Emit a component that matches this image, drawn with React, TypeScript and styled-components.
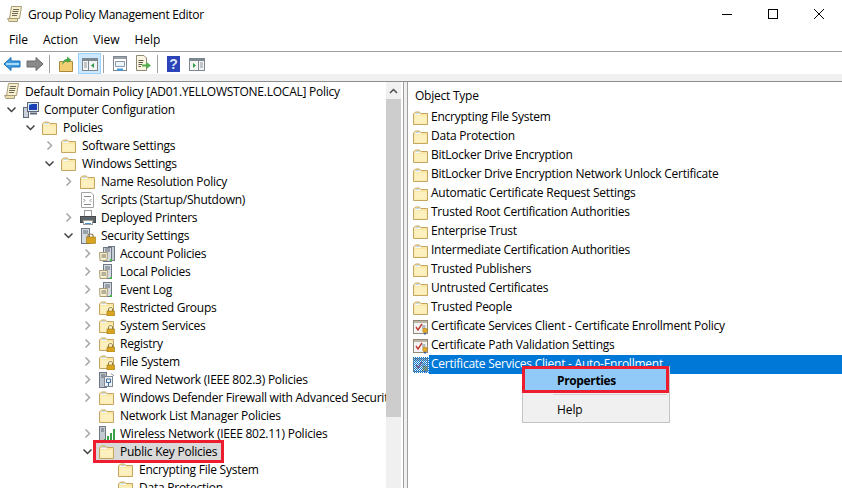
import React from "react";
import styled, { createGlobalStyle } from "styled-components";

const GlobalStyle = createGlobalStyle`
  html, body {
    margin: 0;
    padding: 0;
    background: #fff;
  }
  * {
    box-sizing: border-box;
  }
  svg {
    flex: none;
  }
`;

type IconName =
  | "folder"
  | "lockFolder"
  | "scroll"
  | "computer"
  | "script"
  | "printer"
  | "secure"
  | "server"
  | "serverPair"
  | "wired"
  | "wireless"
  | "cert";

const Folder = () => (
  <>
    <path d="M0.5 4V14.5H14.5V3.5H7.5L6.5 2H2.5Z" fill="#fbe7a4" stroke="#c4a662" />
    <path d="M1.5 6H13.5V13.5H1.5Z" fill="#fdf0bf" />
    <path d="M1.5 4.5H7L8 3.8" fill="none" stroke="#f4f8fb" />
    <path d="M3 3.5H6" stroke="#b9d6ee" />
  </>
);

const Lock = () => (
  <>
    <path d="M9.5 11V9C9.5 7 13.5 7 13.5 9V11" fill="none" stroke="#8a7a50" />
    <rect x="8" y="11" width="7.5" height="5" fill="#d9a520" stroke="#9a7414" strokeWidth="0.6" />
  </>
);

const Icon = ({ name, dithered }: { name: IconName; dithered?: boolean }) => {
  return (
    <svg width="16" height="16" viewBox="0 0 16 16">
      {name === "folder" && <Folder />}
      {name === "lockFolder" && (
        <>
          <Folder />
          <Lock />
        </>
      )}
      {name === "scroll" && (
        <>
          <path d="M4.5 0.5H14.5L12.5 12.5H2.5Z" fill="#f8efcf" stroke="#a89c78" />
          <path d="M0.5 12.5H10.5V15.5H2Z" fill="#ecdfb2" stroke="#a89c78" />
          <path d="M6 3.5H12M5.5 5.5H11.5M5 7.5H11M5 9.5H10" stroke="#6f6a55" />
        </>
      )}
      {name === "computer" && (
        <>
          <rect x="0.5" y="5.5" width="5" height="10" fill="#c9d0da" stroke="#5c6878" />
          <rect x="4.5" y="0.5" width="11" height="9" fill="#dfe6ee" stroke="#5c6878" />
          <rect x="6" y="2" width="8" height="6" fill="#1b3fb5" />
          <path d="M6 3.5L9 2H6Z" fill="#5ec8f0" />
          <path d="M7 11.5H14" stroke="#5c6878" strokeWidth="2" />
        </>
      )}
      {name === "script" && (
        <>
          <path d="M1.5 0.5H11L13.5 3V15.5H1.5Z" fill="#fff" stroke="#a4a4a4" />
          <path d="M4 4.5H11M3.5 7L5 8.5L3.5 10M11.5 7L10 8.5L11.5 10M4 12.5H11" stroke="#8a8a8a" fill="none" />
        </>
      )}
      {name === "printer" && (
        <>
          <rect x="4.5" y="0.5" width="7" height="6" fill="#fff" stroke="#9a9a9a" />
          <rect x="0.5" y="6.5" width="15" height="6" fill="#5f6468" stroke="#44484c" />
          <rect x="3.5" y="10.5" width="9" height="4" fill="#fff" stroke="#9a9a9a" />
          <path d="M5 13.5H11" stroke="#4b90d0" />
        </>
      )}
      {name === "secure" && (
        <>
          <rect x="1.5" y="0.5" width="8" height="15" fill="#d6dbe1" stroke="#6e7884" />
          <path d="M3 3H8M3 5H8" stroke="#5c6674" />
          <path d="M8 9V7.5C8 5.5 13 5.5 13 7.5V9" fill="none" stroke="#8a7a50" strokeWidth="1.2" />
          <rect x="6.5" y="9" width="9" height="6.5" fill="#d9a520" stroke="#9a7414" strokeWidth="0.6" />
        </>
      )}
      {(name === "server" || name === "serverPair") && (
        <>
          {name === "serverPair" && <rect x="9.5" y="0.5" width="6" height="14" fill="#c8ced6" stroke="#6e7884" />}
          <rect x="4.5" y={name === "server" ? 0.5 : 1.5} width="8" height="14" fill="#d6dbe1" stroke="#6e7884" />
          <path d="M6 3H11M6 5H11" stroke="#5c6674" />
          <path d="M0.5 6.5H8.5L8 14.5H1Z" fill="#f6efd2" stroke="#a89c78" />
          <path d="M2.5 9H7M2.5 11H7" stroke="#77715a" />
          <rect x="11" y="13" width="2" height="2" fill="#3fbf3f" />
        </>
      )}
      {name === "wired" && (
        <>
          <rect x="0.5" y="0.5" width="7" height="15" fill="#b9c1ca" stroke="#6e7884" />
          <path d="M2 3H6M2 5H6" stroke="#5c6674" />
          <rect x="5.5" y="4.5" width="8" height="10" fill="#eef2f6" stroke="#7f8994" />
          <path d="M7.5 7H11.5V10.5H7.5ZM9.5 10.5V14" fill="none" stroke="#3f6f9f" />
          <path d="M12 1.5L15 4" stroke="#8a8f96" />
        </>
      )}
      {name === "wireless" && (
        <>
          <rect x="0.5" y="0.5" width="6" height="15" fill="#c3cad2" stroke="#6e7884" />
          <path d="M2 3H5M2 5H5" stroke="#5c6674" />
          <path d="M5 15H7V13H5ZM8 15H10V10H8ZM11 15H13V7H11ZM14 15H16V3H14Z" fill="#3aa04a" />
          <path d="M1 15.5H5L3 12Z" fill="#f6efd2" stroke="#a89c78" strokeWidth="0.5" />
        </>
      )}
      {name === "cert" && (
        <>
          <rect x="0.5" y="1.5" width="14" height="13" fill="#f3f4f6" stroke="#93897a" />
          <path d="M1 3H14" stroke="#bfb6a4" strokeWidth="2" />
          <path d="M3 8L5 11L9 5" fill="none" stroke="#c43a2e" strokeWidth="1.4" />
          <path d="M9 7H12.5M9 9H12" stroke="#7b8594" />
          <path d="M11 13V16L12 15L13 16V13Z" fill="#3a62b0" />
          <circle cx="12" cy="11.5" r="2.4" fill="#e3a928" stroke="#a97a12" strokeWidth="0.5" />
        </>
      )}
      {dithered && (
        <>
          <defs>
            <pattern id="dither" width="2" height="2" patternUnits="userSpaceOnUse">
              <rect width="1" height="1" fill="#0078d7" />
              <rect x="1" y="1" width="1" height="1" fill="#0078d7" />
            </pattern>
          </defs>
          <rect width="16" height="16" fill="url(#dither)" />
        </>
      )}
    </svg>
  );
};

const Window = styled.div`
  position: relative;
  width: 842px;
  height: 488px;
  overflow: hidden;
  background: #fff;
  font-family: "Open Sans", "Noto Sans", "Liberation Sans", sans-serif;
  font-size: 12px;
  color: #000;
  display: flex;
  flex-direction: column;
`;

const TitleBar = styled.div`
  height: 28px;
  flex: none;
  display: flex;
  align-items: center;
  padding-left: 7px;
`;

const TitleText = styled.span`
  margin-left: 5px;
  flex: 1;
  letter-spacing: -0.3px;
`;

const WindowButton = styled.div`
  width: 46px;
  height: 28px;
  display: flex;
  align-items: center;
  justify-content: center;
`;

const MenuBar = styled.div`
  height: 24px;
  flex: none;
  display: flex;
  align-items: center;
  padding-left: 9px;
  gap: 15px;
  border-bottom: 1px solid #a0a0a0;
`;

const ToolBar = styled.div`
  height: 22px;
  flex: none;
  display: flex;
  align-items: center;
  padding: 1px 0 0 3px;
`;

const ToolSlot = styled.div<{ $left: number }>`
  margin-left: ${(p) => p.$left}px;
  display: flex;
`;

const ToolSep = styled.div<{ $left: number }>`
  width: 1px;
  height: 18px;
  background: #a0a0a0;
  margin-left: ${(p) => p.$left}px;
`;

const ToolButton = styled.div`
  width: 23px;
  height: 21px;
  margin-left: 3px;
  display: flex;
  align-items: center;
  justify-content: center;
  background: #cce8ff;
  border: 1px solid #99d1ff;
`;

const Strip = styled.div`
  height: 8px;
  flex: none;
  background: #f0f0f0;
  border-bottom: 1px solid #8e8e8e;
`;

const Panes = styled.div`
  flex: 1;
  display: flex;
  min-height: 0;
`;

const TreePane = styled.div`
  width: 386px;
  flex: none;
  overflow: hidden;
`;

const ScrollBar = styled.div`
  width: 15px;
  flex: none;
  background: #f0f0f0;
  display: flex;
  flex-direction: column;
`;

const ScrollArrow = styled.div`
  height: 17px;
  display: flex;
  align-items: center;
  justify-content: center;
`;

const ScrollThumb = styled.div`
  height: 318px;
  background: #cdcdcd;
`;

const Divider = styled.div`
  width: 5px;
  flex: none;
  margin-left: 2px;
  background: #f0f0f0;
  border-left: 1px solid #a0a0a0;
  border-right: 1px solid #a0a0a0;
`;

const ListPane = styled.div`
  flex: 1;
  min-width: 0;
`;

const RootRow = styled.div`
  height: 18px;
  display: flex;
  align-items: center;
  white-space: nowrap;
  padding-left: 4px;
`;

const TreeRow = styled.div<{ $level: number }>`
  height: 18px;
  display: flex;
  align-items: center;
  white-space: nowrap;
  padding-left: ${(p) => p.$level * 19 - 15}px;
`;

const Twist = styled.div`
  width: 14px;
  height: 16px;
  margin-right: 3px;
  flex: none;
  display: flex;
  align-items: center;
  justify-content: center;
`;

const TreeEntry = styled.div<{ $selected?: boolean }>`
  display: flex;
  align-items: center;
  height: 17px;
  align-self: flex-end;
  margin-left: ${(p) => (p.$selected ? "-1px" : "0")};
  padding: ${(p) => (p.$selected ? "0 4px 0 3px" : "0 2px")};
  background: ${(p) => (p.$selected ? "#d9d9d9" : "transparent")};
  outline: ${(p) => (p.$selected ? "3px solid #ed1c2e" : "none")};
`;

const TreeLabel = styled.span`
  margin-left: 5px;
  letter-spacing: -0.24px;
`;

const ListHeader = styled.div`
  height: 26px;
  display: flex;
  align-items: center;
  padding-left: 7px;
  letter-spacing: -0.24px;
`;

const ListRow = styled.div`
  height: 19px;
  display: flex;
  align-items: center;
  padding-left: 5px;
  white-space: nowrap;
`;

const ListLabel = styled.span<{ $selected?: boolean }>`
  flex: ${(p) => (p.$selected ? 1 : "none")};
  padding-left: 2px;
  height: 19px;
  line-height: 18px;
  letter-spacing: -0.24px;
  color: ${(p) => (p.$selected ? "#fff" : "#000")};
  background: ${(p) => (p.$selected ? "#0078d7" : "transparent")};
`;

const ContextMenu = styled.div`
  position: absolute;
  left: 522px;
  top: 366px;
  width: 148px;
  height: 57px;
  background: #f0f0f0;
  border: 1px solid #c4c4c4;
  padding: 2px;
`;

const MenuItem = styled.div<{ $active?: boolean }>`
  height: 22px;
  display: flex;
  align-items: center;
  padding-left: 32px;
  font-weight: ${(p) => (p.$active ? 700 : 400)};
  letter-spacing: ${(p) => (p.$active ? "-0.35px" : "-0.1px")};
  background: ${(p) => (p.$active ? "#91c9f7" : "transparent")};
`;

const MenuSep = styled.div`
  height: 1px;
  background: #d4d4d4;
  margin: 3px 0 3px 28px;
`;

const MenuRedBox = styled.div`
  position: absolute;
  left: -1px;
  top: -1px;
  width: 147px;
  height: 27px;
  border: 3px solid #ed1c2e;
`;

const Chevron = ({ open }: { open?: boolean }) => (
  <svg width="9" height="9" viewBox="0 0 9 9">
    <path
      d={open ? "M0.5 2.5L4.5 6.5L8.5 2.5" : "M2.5 0.5L6.5 4.5L2.5 8.5"}
      fill="none"
      stroke={open ? "#404040" : "#a6a6a6"}
      strokeWidth="1.5"
    />
  </svg>
);

type TreeItem = {
  level: number;
  text: string;
  icon: IconName;
  twist?: "open" | "closed";
  selected?: boolean;
};

const treeItems: TreeItem[] = [
  { level: 1, text: "Computer Configuration", icon: "computer", twist: "open" },
  { level: 2, text: "Policies", icon: "folder", twist: "open" },
  { level: 3, text: "Software Settings", icon: "folder", twist: "closed" },
  { level: 3, text: "Windows Settings", icon: "folder", twist: "open" },
  { level: 4, text: "Name Resolution Policy", icon: "folder", twist: "closed" },
  { level: 4, text: "Scripts (Startup/Shutdown)", icon: "script" },
  { level: 4, text: "Deployed Printers", icon: "printer", twist: "closed" },
  { level: 4, text: "Security Settings", icon: "secure", twist: "open" },
  { level: 5, text: "Account Policies", icon: "serverPair", twist: "closed" },
  { level: 5, text: "Local Policies", icon: "server", twist: "closed" },
  { level: 5, text: "Event Log", icon: "server", twist: "closed" },
  { level: 5, text: "Restricted Groups", icon: "lockFolder", twist: "closed" },
  { level: 5, text: "System Services", icon: "lockFolder", twist: "closed" },
  { level: 5, text: "Registry", icon: "lockFolder", twist: "closed" },
  { level: 5, text: "File System", icon: "lockFolder", twist: "closed" },
  { level: 5, text: "Wired Network (IEEE 802.3) Policies", icon: "wired", twist: "closed" },
  { level: 5, text: "Windows Defender Firewall with Advanced Security", icon: "folder", twist: "closed" },
  { level: 5, text: "Network List Manager Policies", icon: "folder" },
  { level: 5, text: "Wireless Network (IEEE 802.11) Policies", icon: "wireless", twist: "closed" },
  { level: 5, text: "Public Key Policies", icon: "folder", twist: "open", selected: true },
  { level: 6, text: "Encrypting File System", icon: "folder" },
  { level: 6, text: "Data Protection", icon: "folder" },
];

const listItems: { text: string; icon: IconName; selected?: boolean }[] = [
  { text: "Encrypting File System", icon: "folder" },
  { text: "Data Protection", icon: "folder" },
  { text: "BitLocker Drive Encryption", icon: "folder" },
  { text: "BitLocker Drive Encryption Network Unlock Certificate", icon: "folder" },
  { text: "Automatic Certificate Request Settings", icon: "folder" },
  { text: "Trusted Root Certification Authorities", icon: "folder" },
  { text: "Enterprise Trust", icon: "folder" },
  { text: "Intermediate Certification Authorities", icon: "folder" },
  { text: "Trusted Publishers", icon: "folder" },
  { text: "Untrusted Certificates", icon: "folder" },
  { text: "Trusted People", icon: "folder" },
  { text: "Certificate Services Client - Certificate Enrollment Policy", icon: "cert" },
  { text: "Certificate Path Validation Settings", icon: "cert" },
  { text: "Certificate Services Client - Auto-Enrollment", icon: "cert", selected: true },
];

const ToolGlyph = ({ kind }: { kind: string }) => (
  <svg width="18" height="18" viewBox="0 0 18 18">
    {kind === "back" && (
      <>
        <path d="M1 9L8 2.5V6H17V12H8V15.5Z" fill="#3f9be0" stroke="#1c6fb5" />
        <path d="M3 9H16" stroke="#a6dcf8" strokeWidth="2" />
      </>
    )}
    {kind === "forward" && <path d="M17 9L10 2.5V6H1V12H10V15.5Z" fill="#8a8a8a" stroke="#6a6a6a" />}
    {kind === "up" && (
      <>
        <path d="M2.5 6.5H15.5V16.5H2.5Z" fill="#f2cf73" stroke="#a98a3c" />
        <path d="M5 10C6 5 8 4 10 4V1.5L14.5 5L10 8V6C8 6 7 8 5 10Z" fill="#4aa84a" />
      </>
    )}
    {(kind === "pane" || kind === "action") && (
      <>
        <rect x="1.5" y="3.5" width="15" height="12" fill="#f4f4f4" stroke="#7d8790" />
        <path d="M1.5 5H16.5" stroke="#7d8790" strokeWidth="2" />
        {kind === "pane" ? (
          <>
            <path d="M7.5 6V15" stroke="#7d8790" />
            <path d="M3 8H6M3 10H6M3 12H6" stroke="#8f98a0" />
            <path d="M13 8V13L10 10.5Z" fill="#2f9a4a" />
          </>
        ) : (
          <>
            <path d="M10.5 6V15" stroke="#7d8790" />
            <path d="M12 8H15M12 10H15M12 12H15" stroke="#8f98a0" />
            <path d="M5 8V13L8 10.5Z" fill="#2f9a4a" />
          </>
        )}
      </>
    )}
    {kind === "props" && (
      <>
        <rect x="2.5" y="1.5" width="13" height="14" fill="#fff" stroke="#7f8890" />
        <path d="M3 3H15" stroke="#9aa2aa" strokeWidth="2" />
        <path d="M4.5 6.5H13.5V11.5H4.5Z" fill="#eef4f8" stroke="#8a97a4" />
        <path d="M6 14.5H12" stroke="#3f9be0" strokeWidth="2" />
      </>
    )}
    {kind === "export" && (
      <>
        <path d="M2.5 0.5H10L12.5 3V15.5H2.5Z" fill="#fbf6e2" stroke="#8e8a76" />
        <path d="M4.5 5.5H9.5M4.5 7.5H9M4.5 9.5H8M4.5 11.5H7" stroke="#5f5b48" />
        <path d="M8 9.5H12.5V7L17 10.5L12.5 14V11.5H8Z" fill="#52b04f" />
      </>
    )}
    {kind === "help" && (
      <>
        <rect x="2" y="1" width="13" height="16" fill="#2b44b8" />
        <text x="8.5" y="14" fontSize="14" fontWeight="700" textAnchor="middle" fill="#dfe6fa" fontFamily="Liberation Sans, sans-serif">?</text>
      </>
    )}
  </svg>
);

export default function App() {
  return (
    <Window>
      <GlobalStyle />
      <TitleBar>
        <Icon name="scroll" />
        <TitleText>Group Policy Management Editor</TitleText>
        <WindowButton>
          <svg width="10" height="10" viewBox="0 0 10 10">
            <path d="M0 5.5H10" stroke="#000" />
          </svg>
        </WindowButton>
        <WindowButton>
          <svg width="10" height="10" viewBox="0 0 10 10">
            <rect x="0.5" y="0.5" width="9" height="9" fill="none" stroke="#000" />
          </svg>
        </WindowButton>
        <WindowButton>
          <svg width="10" height="10" viewBox="0 0 10 10">
            <path d="M0 0L10 10M10 0L0 10" stroke="#000" />
          </svg>
        </WindowButton>
      </TitleBar>
      <MenuBar>
        <span>File</span>
        <span>Action</span>
        <span>View</span>
        <span>Help</span>
      </MenuBar>
      <ToolBar>
        <ToolSlot $left={0}>
          <ToolGlyph kind="back" />
        </ToolSlot>
        <ToolSlot $left={5}>
          <ToolGlyph kind="forward" />
        </ToolSlot>
        <ToolSep $left={5} />
        <ToolSlot $left={7}>
          <ToolGlyph kind="up" />
        </ToolSlot>
        <ToolButton>
          <ToolGlyph kind="pane" />
        </ToolButton>
        <ToolSep $left={2} />
        <ToolSlot $left={7}>
          <ToolGlyph kind="props" />
        </ToolSlot>
        <ToolSlot $left={5}>
          <ToolGlyph kind="export" />
        </ToolSlot>
        <ToolSep $left={5} />
        <ToolSlot $left={7}>
          <ToolGlyph kind="help" />
        </ToolSlot>
        <ToolSlot $left={5}>
          <ToolGlyph kind="action" />
        </ToolSlot>
      </ToolBar>
      <Strip />
      <Panes>
        <TreePane>
          <RootRow>
            <Icon name="scroll" />
            <TreeLabel>Default Domain Policy [AD01.YELLOWSTONE.LOCAL] Policy</TreeLabel>
          </RootRow>
          {treeItems.map((item) => (
            <TreeRow key={item.text + item.level} $level={item.level}>
              <Twist>{item.twist && <Chevron open={item.twist === "open"} />}</Twist>
              <TreeEntry $selected={item.selected}>
                <Icon name={item.icon} />
                <TreeLabel>{item.text}</TreeLabel>
              </TreeEntry>
            </TreeRow>
          ))}
        </TreePane>
        <ScrollBar>
          <ScrollArrow>
            <svg width="9" height="6" viewBox="0 0 9 6">
              <path d="M1 5L4.5 1.5L8 5" fill="none" stroke="#505050" strokeWidth="1.5" />
            </svg>
          </ScrollArrow>
          <ScrollThumb />
        </ScrollBar>
        <Divider />
        <ListPane>
          <ListHeader>Object Type</ListHeader>
          {listItems.map((item) => (
            <ListRow key={item.text}>
              <Icon name={item.icon} dithered={item.selected} />
              <ListLabel $selected={item.selected}>{item.text}</ListLabel>
            </ListRow>
          ))}
        </ListPane>
      </Panes>
      <ContextMenu>
        <MenuItem $active>Properties</MenuItem>
        <MenuSep />
        <MenuItem>Help</MenuItem>
        <MenuRedBox />
      </ContextMenu>
    </Window>
  );
}
